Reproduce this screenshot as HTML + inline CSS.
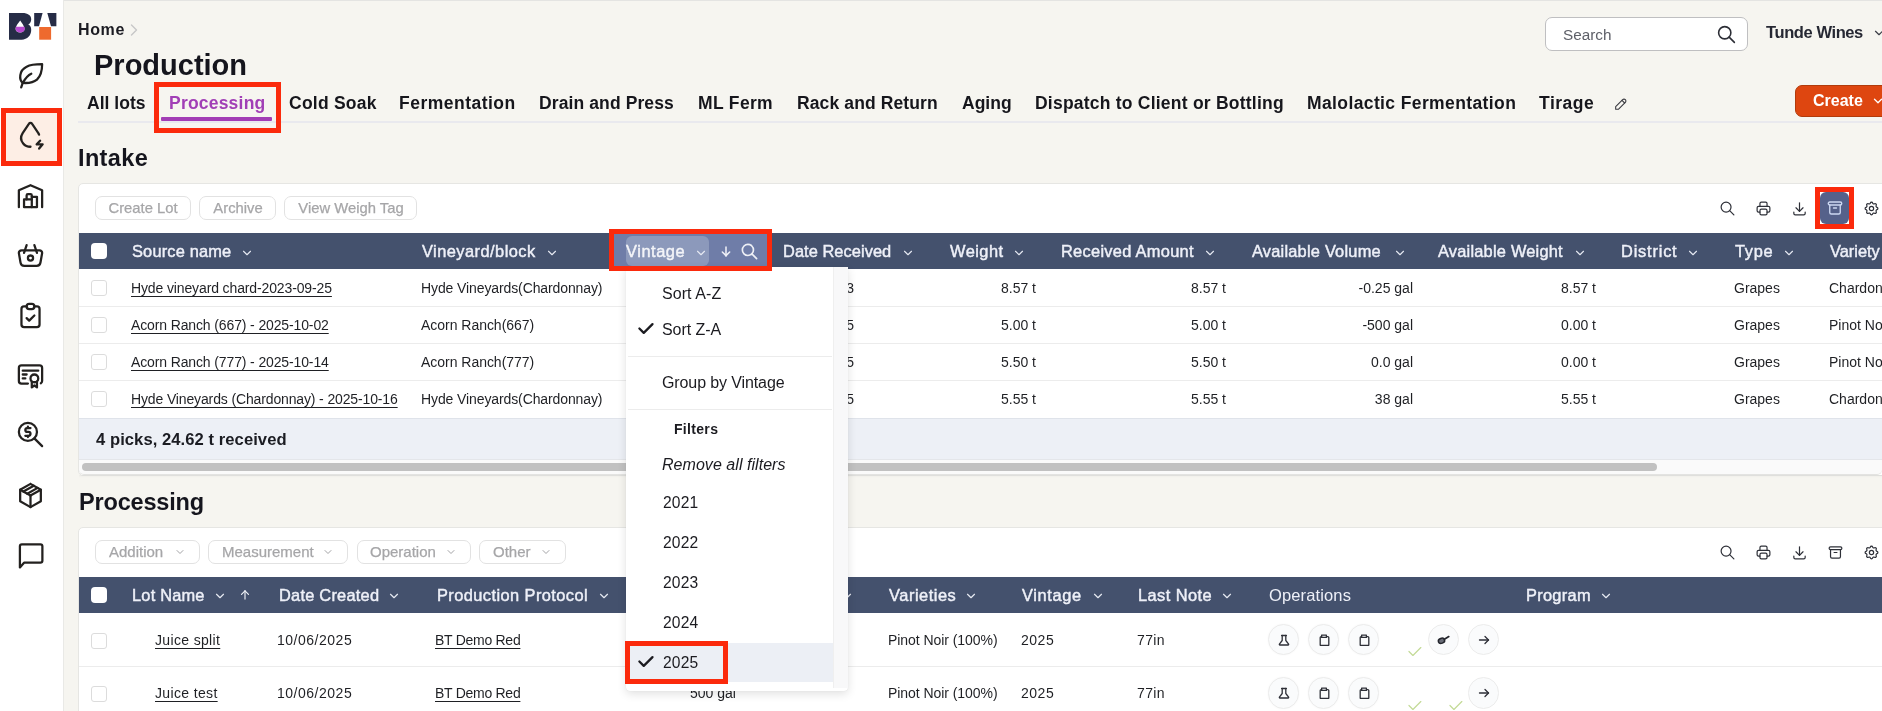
<!DOCTYPE html><html><head><meta charset="utf-8"><style>
html,body{margin:0;padding:0}
body{width:1882px;height:711px;overflow:hidden;position:relative;background:#f6f5f0;font-family:"Liberation Sans",sans-serif}
.t{position:absolute;white-space:nowrap;will-change:transform}
.r{position:absolute;box-sizing:border-box}
</style></head><body>
<div class="r" style="left:0px;top:0px;width:1882px;height:1px;background:#e4e4e2"></div>
<div class="r" style="left:0px;top:0px;width:63px;height:711px;background:#ffffff"></div>
<div class="r" style="left:63px;top:0px;width:1px;height:711px;background:#e9e9e6"></div>
<svg class="r" style="left:8px;top:12px" width="50" height="29" viewBox="0 0 50 29">
<path d="M1 1h13.5c5.2 0 8.7 2.3 8.7 6.2c0 2.6-1.2 4.3-3 5.3c2 .9 3 2.6 3 5.6c0 5.5-3.8 9.6-9.6 9.6H1z" fill="#262c46"/>
<path d="M12.2 8.6c-1.3 1.9-4.6 5.6-4.6 8.4c0 2.2 2 3.6 4.5 3.6s4.4-1.4 4.4-3.6c0-2.8-3.1-6.5-4.3-8.4z" fill="#fff"/>
<path d="M7.7 14.8h8.8c.2 .7 .2 1.5 .2 2.2c0 2.2-2 3.6-4.5 3.6s-4.5-1.4-4.5-3.6c0-.7 0-1.5 .2-2.2z" fill="#b84ad0"/>
<path d="M26.2 1h8.4l-3.6 13.2h-4.8z" fill="#262c46"/>
<path d="M39.3 1h9.1v13.2h-5.4z" fill="#262c46"/>
<rect x="31.2" y="15" width="11.9" height="12.7" fill="#ee6a2e"/>
</svg>
<div class="r" style="left:1px;top:108px;width:61px;height:58px;background:#fdeee5;border:5px solid #fb2a0c"></div>
<svg class="r" style="left:15.2px;top:59.4px;" width="31" height="31" viewBox="0 0 24 24" fill="none" stroke="#23211f" stroke-width="1.75" stroke-linecap="round" stroke-linejoin="round"><path d="M4.8 22l1.2 -3.5"/><path d="M6 18.5c-3 -2.5 -3 -9.5 3 -12.5c3 -1.7 7 -2 12 -2c0 5 -1 9 -4 12c-3 2.5 -7 2.8 -11 2.5z"/><path d="M6 18.5c2 -3.5 4 -6 6.6 -7.1"/></svg>
<svg class="r" style="left:15.2px;top:119.3px;" width="31" height="31" viewBox="0 0 24 24" fill="none" stroke="#23211f" stroke-width="1.75" stroke-linecap="round" stroke-linejoin="round"><path d="M18.628 12.076a6.653 6.653 0 0 0 -.564 -1.199l-4.8 -7.108a1.5 1.5 0 0 0 -2.528 0l-4.8 7.108c-1.6 2.526 -1.44 5.774 .4 8.04c1.4 1.718 3.569 2.564 5.664 2.564"/><path d="M19.4 16.8l-2.6 2.8h4.6l-2.7 3.3"/></svg>
<svg class="r" style="left:15.2px;top:180px;" width="31" height="31" viewBox="0 0 24 24" fill="none" stroke="#23211f" stroke-width="1.75" stroke-linecap="round" stroke-linejoin="round"><path d="M3 21v-13l9 -4l9 4v13"/><path d="M13 13h4v8h-10v-6h6"/><path d="M13 21v-9a1 1 0 0 0 -1 -1h-2a1 1 0 0 0 -1 1v3"/></svg>
<svg class="r" style="left:15.2px;top:240px;" width="31" height="31" viewBox="0 0 24 24" fill="none" stroke="#23211f" stroke-width="1.75" stroke-linecap="round" stroke-linejoin="round"><path d="M10 14a2 2 0 1 0 4 0a2 2 0 0 0 -4 0"/><path d="M5.001 8h13.999a2 2 0 0 1 1.977 2.304l-1.255 7.152a3 3 0 0 1 -2.966 2.544h-9.512a3 3 0 0 1 -2.965 -2.544l-1.255 -7.152a2 2 0 0 1 1.977 -2.304z"/><path d="M17 10l-2 -6"/><path d="M7 10l2 -6"/></svg>
<svg class="r" style="left:15.2px;top:300.3px;" width="31" height="31" viewBox="0 0 24 24" fill="none" stroke="#23211f" stroke-width="1.75" stroke-linecap="round" stroke-linejoin="round"><path d="M9 5h-2a2 2 0 0 0 -2 2v12a2 2 0 0 0 2 2h10a2 2 0 0 0 2 -2v-12a2 2 0 0 0 -2 -2h-2"/><path d="M9 3m0 2a2 2 0 0 1 2 -2h2a2 2 0 0 1 2 2v0a2 2 0 0 1 -2 2h-2a2 2 0 0 1 -2 -2z"/><path d="M9 14l2 2l4 -4"/></svg>
<svg class="r" style="left:15.2px;top:359.4px;" width="31" height="31" viewBox="0 0 24 24" fill="none" stroke="#23211f" stroke-width="1.75" stroke-linecap="round" stroke-linejoin="round"><path d="M15 15m-3 0a3 3 0 1 0 6 0a3 3 0 1 0 -6 0"/><path d="M13 17.5v4.5l2 -1.5l2 1.5v-4.5"/><path d="M10 19h-5a2 2 0 0 1 -2 -2v-10c0 -1.1 .9 -2 2 -2h14a2 2 0 0 1 2 2v10a2 2 0 0 1 -1 1.73"/><path d="M6 9l12 0"/><path d="M6 12l3 0"/><path d="M6 15l2 0"/></svg>
<svg class="r" style="left:15.2px;top:419.2px;" width="31" height="31" viewBox="0 0 24 24" fill="none" stroke="#23211f" stroke-width="1.75" stroke-linecap="round" stroke-linejoin="round"><path d="M10 10m-7 0a7 7 0 1 0 14 0a7 7 0 1 0 -14 0"/><path d="M21 21l-6 -6"/><path d="M12 7h-2.5a1.5 1.5 0 0 0 0 3h1a1.5 1.5 0 0 1 0 3h-2.5"/><path d="M10 13v1m0 -8v1"/></svg>
<svg class="r" style="left:15.2px;top:480px;" width="31" height="31" viewBox="0 0 24 24" fill="none" stroke="#23211f" stroke-width="1.75" stroke-linecap="round" stroke-linejoin="round"><path d="M12 3l8 4.5l0 9l-8 4.5l-8 -4.5l0 -9l8 -4.5"/><path d="M12 12l8 -4.5"/><path d="M12 12l0 9"/><path d="M12 12l-8 -4.5"/><path d="M14.5 4.4l-8 4.5"/><path d="M17.5 6.1l-8 4.5"/></svg>
<svg class="r" style="left:15.2px;top:538.6px;" width="31" height="31" viewBox="0 0 24 24" fill="none" stroke="#23211f" stroke-width="1.75" stroke-linecap="round" stroke-linejoin="round"><path d="M3.8 22v-16.3a1.5 1.5 0 0 1 1.5 -1.5h14.4a1.5 1.5 0 0 1 1.5 1.5v11.1a1.5 1.5 0 0 1 -1.5 1.5h-12.7z"/></svg>
<div class="t" style="left:78px;top:20.16px;font-size:16px;line-height:19.2px;font-weight:700;color:#1b1b22;;letter-spacing:0.607px">Home</div>
<svg class="r" style="left:124px;top:19.8px;" width="20" height="20" viewBox="0 0 24 24" fill="none" stroke="#c8c8c8" stroke-width="1.7" stroke-linecap="round" stroke-linejoin="round"><path d="M9 6l6 6l-6 6"/></svg>
<div class="t" style="left:94px;top:47.75px;font-size:29px;line-height:34.8px;font-weight:700;color:#15151d;">Production</div>
<div class="r" style="left:1545px;top:17px;width:203px;height:34px;background:#fff;border:1px solid #bfbfc1;border-radius:7px"></div>
<div class="t" style="left:1563px;top:25.72px;font-size:15.3px;line-height:18.36px;font-weight:400;color:#5e6068;">Search</div>
<svg class="r" style="left:1716px;top:24px;" width="21" height="21" viewBox="0 0 24 24" fill="none" stroke="#2b2d35" stroke-width="1.8" stroke-linecap="round" stroke-linejoin="round"><path d="M10 10m-7 0a7 7 0 1 0 14 0a7 7 0 1 0 -14 0"/><path d="M21 21l-6 -6"/></svg>
<div class="t" style="left:1766.3px;top:23.18px;font-size:16.5px;line-height:19.8px;font-weight:700;color:#262833;;letter-spacing:-0.401px">Tunde Wines</div>
<svg class="r" style="left:1872px;top:26px;" width="14" height="14" viewBox="0 0 24 24" fill="none" stroke="#3a3c45" stroke-width="2" stroke-linecap="round" stroke-linejoin="round"><path d="M6 9l6 6l6 -6"/></svg>
<div class="r" style="left:78px;top:121px;width:1804px;height:2px;background:#e9e9ee"></div>
<div class="t" style="left:86.7px;top:92.64px;font-size:17.5px;line-height:21.0px;font-weight:700;color:#16161c;;letter-spacing:0.020px">All lots</div>
<div class="t" style="left:169.4px;top:92.64px;font-size:17.5px;line-height:21.0px;font-weight:700;color:#a13fb6;;letter-spacing:0.208px">Processing</div>
<div class="t" style="left:288.5px;top:92.64px;font-size:17.5px;line-height:21.0px;font-weight:700;color:#16161c;;letter-spacing:0.242px">Cold Soak</div>
<div class="t" style="left:399.4px;top:92.64px;font-size:17.5px;line-height:21.0px;font-weight:700;color:#16161c;;letter-spacing:0.485px">Fermentation</div>
<div class="t" style="left:539.3px;top:92.64px;font-size:17.5px;line-height:21.0px;font-weight:700;color:#16161c;;letter-spacing:0.110px">Drain and Press</div>
<div class="t" style="left:698.3px;top:92.64px;font-size:17.5px;line-height:21.0px;font-weight:700;color:#16161c;;letter-spacing:0.346px">ML Ferm</div>
<div class="t" style="left:796.8px;top:92.64px;font-size:17.5px;line-height:21.0px;font-weight:700;color:#16161c;;letter-spacing:0.119px">Rack and Return</div>
<div class="t" style="left:961.9px;top:92.64px;font-size:17.5px;line-height:21.0px;font-weight:700;color:#16161c;;letter-spacing:0.022px">Aging</div>
<div class="t" style="left:1034.9px;top:92.64px;font-size:17.5px;line-height:21.0px;font-weight:700;color:#16161c;;letter-spacing:0.224px">Dispatch to Client or Bottling</div>
<div class="t" style="left:1307.1px;top:92.64px;font-size:17.5px;line-height:21.0px;font-weight:700;color:#16161c;;letter-spacing:0.387px">Malolactic Fermentation</div>
<div class="t" style="left:1538.9px;top:92.64px;font-size:17.5px;line-height:21.0px;font-weight:700;color:#16161c;;letter-spacing:0.512px">Tirage</div>
<div class="r" style="left:161px;top:117px;width:111px;height:4px;background:#a23db5;border-radius:1px"></div>
<div class="r" style="left:154px;top:82px;width:127px;height:51px;border:5px solid #fb2a0c"></div>
<svg class="r" style="left:1613px;top:96px;" width="16" height="16" viewBox="0 0 24 24" fill="none" stroke="#3a3a40" stroke-width="1.6" stroke-linecap="round" stroke-linejoin="round"><path d="M4 20h4l10.5 -10.5a2.828 2.828 0 1 0 -4 -4l-10.5 10.5v4"/><path d="M13.5 6.5l4 4"/></svg>
<div class="r" style="left:1795px;top:85px;width:100px;height:32px;background:#de4610;border:1px solid #b13b0c;border-radius:7px"></div>
<div class="t" style="left:1812.6px;top:90.86px;font-size:16px;line-height:19.2px;font-weight:700;color:#ffffff;">Create</div>
<svg class="r" style="left:1871px;top:94px;" width="14" height="14" viewBox="0 0 24 24" fill="none" stroke="#fff" stroke-width="2.2" stroke-linecap="round" stroke-linejoin="round"><path d="M6 9l6 6l6 -6"/></svg>
<div class="t" style="left:78px;top:144.16px;font-size:23.5px;line-height:28.2px;font-weight:700;color:#15151d;;letter-spacing:0.357px">Intake</div>
<div class="r" style="left:78px;top:183px;width:1820px;height:293px;background:#fff;border-radius:5px;border:1px solid #e6e6e3"></div>
<div class="r" style="left:95px;top:196px;width:96px;height:24px;border:1px solid #e2e2e2;border-radius:7px;background:#fff"></div>
<div class="t" style="left:-157.0px;width:600px;text-align:center;top:199.79px;font-size:14.8px;line-height:17.76px;font-weight:400;color:#a6a6a8;-webkit-text-stroke:0.25px #a6a6a8">Create Lot</div>
<div class="r" style="left:199px;top:196px;width:77px;height:24px;border:1px solid #e2e2e2;border-radius:7px;background:#fff"></div>
<div class="t" style="left:-62.5px;width:600px;text-align:center;top:199.79px;font-size:14.8px;line-height:17.76px;font-weight:400;color:#a6a6a8;-webkit-text-stroke:0.25px #a6a6a8">Archive</div>
<div class="r" style="left:284px;top:196px;width:133px;height:24px;border:1px solid #e2e2e2;border-radius:7px;background:#fff"></div>
<div class="t" style="left:50.5px;width:600px;text-align:center;top:199.79px;font-size:14.8px;line-height:17.76px;font-weight:400;color:#a6a6a8;-webkit-text-stroke:0.25px #a6a6a8">View Weigh Tag</div>
<svg class="r" style="left:1718.5px;top:199.5px;" width="17" height="17" viewBox="0 0 24 24" fill="none" stroke="#2e3038" stroke-width="1.7" stroke-linecap="round" stroke-linejoin="round"><path d="M10 10m-7 0a7 7 0 1 0 14 0a7 7 0 1 0 -14 0"/><path d="M21 21l-6 -6"/></svg>
<svg class="r" style="left:1754.5px;top:199.5px;" width="17" height="17" viewBox="0 0 24 24" fill="none" stroke="#2e3038" stroke-width="1.7" stroke-linecap="round" stroke-linejoin="round"><path d="M17 17h2a2 2 0 0 0 2 -2v-4a2 2 0 0 0 -2 -2h-14a2 2 0 0 0 -2 2v4a2 2 0 0 0 2 2h2"/><path d="M17 9v-4a2 2 0 0 0 -2 -2h-6a2 2 0 0 0 -2 2v4"/><path d="M7 13m0 2a2 2 0 0 1 2 -2h6a2 2 0 0 1 2 2v4a2 2 0 0 1 -2 2h-6a2 2 0 0 1 -2 -2z"/></svg>
<svg class="r" style="left:1790.5px;top:199.5px;" width="17" height="17" viewBox="0 0 24 24" fill="none" stroke="#2e3038" stroke-width="1.7" stroke-linecap="round" stroke-linejoin="round"><path d="M4 17v2a2 2 0 0 0 2 2h12a2 2 0 0 0 2 -2v-2"/><path d="M7 11l5 5l5 -5"/><path d="M12 4l0 12"/></svg>
<svg class="r" style="left:1862.5px;top:199.5px;" width="17" height="17" viewBox="0 0 24 24" fill="none" stroke="#2e3038" stroke-width="1.7" stroke-linecap="round" stroke-linejoin="round"><path d="M10.325 4.317c.426 -1.756 2.924 -1.756 3.35 0a1.724 1.724 0 0 0 2.573 1.066c1.543 -.94 3.31 .826 2.37 2.37a1.724 1.724 0 0 0 1.065 2.572c1.756 .426 1.756 2.924 0 3.35a1.724 1.724 0 0 0 -1.066 2.573c.94 1.543 -.826 3.31 -2.37 2.37a1.724 1.724 0 0 0 -2.572 1.065c-.426 1.756 -2.924 1.756 -3.35 0a1.724 1.724 0 0 0 -2.573 -1.066c-1.543 .94 -3.31 -.826 -2.37 -2.37a1.724 1.724 0 0 0 -1.065 -2.572c-1.756 -.426 -1.756 -2.924 0 -3.35a1.724 1.724 0 0 0 1.066 -2.573c-.94 -1.543 .826 -3.31 2.37 -2.37c1 .608 2.296 .07 2.572 -1.065z"/><path d="M9 12a3 3 0 1 0 6 0a3 3 0 0 0 -6 0"/></svg>
<div class="r" style="left:79px;top:233px;width:1803px;height:36px;background:#44516d"></div>
<div class="r" style="left:91px;top:243px;width:16px;height:16px;background:#fff;border-radius:4px"></div>
<div class="t" style="left:132.4px;top:241.68px;font-size:16.4px;line-height:19.68px;font-weight:400;color:#eef0f8;-webkit-text-stroke:0.45px #eef0f8;letter-spacing:0.172px">Source name</div>
<svg class="r" style="left:239.9px;top:245.5px;" width="14" height="14" viewBox="0 0 24 24" fill="none" stroke="#e6e9f2" stroke-width="1.9" stroke-linecap="round" stroke-linejoin="round"><path d="M6 9l6 6l6 -6"/></svg>
<div class="t" style="left:422px;top:241.68px;font-size:16.4px;line-height:19.68px;font-weight:400;color:#eef0f8;-webkit-text-stroke:0.45px #eef0f8;letter-spacing:0.459px">Vineyard/block</div>
<svg class="r" style="left:544.5px;top:245.5px;" width="14" height="14" viewBox="0 0 24 24" fill="none" stroke="#e6e9f2" stroke-width="1.9" stroke-linecap="round" stroke-linejoin="round"><path d="M6 9l6 6l6 -6"/></svg>
<div class="t" style="left:783.2px;top:241.68px;font-size:16.4px;line-height:19.68px;font-weight:400;color:#eef0f8;-webkit-text-stroke:0.45px #eef0f8;letter-spacing:0.060px">Date Received</div>
<svg class="r" style="left:900.5px;top:245.5px;" width="14" height="14" viewBox="0 0 24 24" fill="none" stroke="#e6e9f2" stroke-width="1.9" stroke-linecap="round" stroke-linejoin="round"><path d="M6 9l6 6l6 -6"/></svg>
<div class="t" style="left:949.8px;top:241.68px;font-size:16.4px;line-height:19.68px;font-weight:400;color:#eef0f8;-webkit-text-stroke:0.45px #eef0f8;letter-spacing:0.468px">Weight</div>
<svg class="r" style="left:1011.9px;top:245.5px;" width="14" height="14" viewBox="0 0 24 24" fill="none" stroke="#e6e9f2" stroke-width="1.9" stroke-linecap="round" stroke-linejoin="round"><path d="M6 9l6 6l6 -6"/></svg>
<div class="t" style="left:1061.3px;top:241.68px;font-size:16.4px;line-height:19.68px;font-weight:400;color:#eef0f8;-webkit-text-stroke:0.45px #eef0f8;letter-spacing:0.287px">Received Amount</div>
<svg class="r" style="left:1202.5px;top:245.5px;" width="14" height="14" viewBox="0 0 24 24" fill="none" stroke="#e6e9f2" stroke-width="1.9" stroke-linecap="round" stroke-linejoin="round"><path d="M6 9l6 6l6 -6"/></svg>
<div class="t" style="left:1251.6px;top:241.68px;font-size:16.4px;line-height:19.68px;font-weight:400;color:#eef0f8;-webkit-text-stroke:0.45px #eef0f8;letter-spacing:0.211px">Available Volume</div>
<svg class="r" style="left:1392.5px;top:245.5px;" width="14" height="14" viewBox="0 0 24 24" fill="none" stroke="#e6e9f2" stroke-width="1.9" stroke-linecap="round" stroke-linejoin="round"><path d="M6 9l6 6l6 -6"/></svg>
<div class="t" style="left:1438px;top:241.68px;font-size:16.4px;line-height:19.68px;font-weight:400;color:#eef0f8;-webkit-text-stroke:0.45px #eef0f8;letter-spacing:0.212px">Available Weight</div>
<svg class="r" style="left:1572.5px;top:245.5px;" width="14" height="14" viewBox="0 0 24 24" fill="none" stroke="#e6e9f2" stroke-width="1.9" stroke-linecap="round" stroke-linejoin="round"><path d="M6 9l6 6l6 -6"/></svg>
<div class="t" style="left:1621px;top:241.68px;font-size:16.4px;line-height:19.68px;font-weight:400;color:#eef0f8;-webkit-text-stroke:0.45px #eef0f8;letter-spacing:0.800px">District</div>
<svg class="r" style="left:1685.5px;top:245.5px;" width="14" height="14" viewBox="0 0 24 24" fill="none" stroke="#e6e9f2" stroke-width="1.9" stroke-linecap="round" stroke-linejoin="round"><path d="M6 9l6 6l6 -6"/></svg>
<div class="t" style="left:1734.8px;top:241.68px;font-size:16.4px;line-height:19.68px;font-weight:400;color:#eef0f8;-webkit-text-stroke:0.45px #eef0f8;letter-spacing:0.704px">Type</div>
<svg class="r" style="left:1781.5px;top:245.5px;" width="14" height="14" viewBox="0 0 24 24" fill="none" stroke="#e6e9f2" stroke-width="1.9" stroke-linecap="round" stroke-linejoin="round"><path d="M6 9l6 6l6 -6"/></svg>
<div class="t" style="left:1830.4px;top:241.68px;font-size:16.4px;line-height:19.68px;font-weight:400;color:#eef0f8;-webkit-text-stroke:0.45px #eef0f8">Variety</div>
<div class="r" style="left:614px;top:234px;width:153px;height:33px;background:#6f7da8"></div>
<div class="r" style="left:626px;top:236px;width:83px;height:30px;background:#8c99bb;border-radius:6px"></div>
<div class="t" style="left:626px;top:241.68px;font-size:16.4px;line-height:19.68px;font-weight:400;color:#f3f4f8;-webkit-text-stroke:0.45px #f3f4f8;letter-spacing:0.558px">Vintage</div>
<svg class="r" style="left:693.5px;top:245.5px;" width="14" height="14" viewBox="0 0 24 24" fill="none" stroke="#e6e9f2" stroke-width="1.9" stroke-linecap="round" stroke-linejoin="round"><path d="M6 9l6 6l6 -6"/></svg>
<svg class="r" style="left:717.5px;top:243px;" width="16" height="16" viewBox="0 0 24 24" fill="none" stroke="#eef0f6" stroke-width="2.3" stroke-linecap="round" stroke-linejoin="round"><path d="M12 6l0 13"/><path d="M17.5 13.5l-5.5 5.5"/><path d="M6.5 13.5l5.5 5.5"/></svg>
<svg class="r" style="left:740px;top:241.5px;" width="19" height="19" viewBox="0 0 24 24" fill="none" stroke="#eef0f6" stroke-width="2.1" stroke-linecap="round" stroke-linejoin="round"><path d="M10 10m-7 0a7 7 0 1 0 14 0a7 7 0 1 0 -14 0"/><path d="M21 21l-6 -6"/></svg>
<div class="r" style="left:1815px;top:187px;width:39px;height:42px;border:5px solid #fb2a0c;background:#fff"></div>
<div class="r" style="left:1820px;top:192px;width:29px;height:32px;background:#55618a;border-radius:6px"></div>
<svg class="r" style="left:1826px;top:199px;" width="18" height="18" viewBox="0 0 24 24" fill="none" stroke="#cdd8f2" stroke-width="1.8" stroke-linecap="round" stroke-linejoin="round"><path d="M3 4m0 2a2 2 0 0 1 2 -2h14a2 2 0 0 1 2 2v0a2 2 0 0 1 -2 2h-14a2 2 0 0 1 -2 -2z"/><path d="M5 8v10a2 2 0 0 0 2 2h10a2 2 0 0 0 2 -2v-10"/><path d="M10 12l4 0"/></svg>
<div class="r" style="left:91px;top:280px;width:16px;height:16px;border:1px solid #dcdcdc;border-radius:3px;background:#fff"></div>
<div class="t" style="left:131.1px;top:279.85px;font-size:14px;line-height:16.8px;font-weight:400;color:#1f2024;text-decoration:underline;text-underline-offset:3px;text-decoration-thickness:1px;;letter-spacing:-0.127px">Hyde vineyard chard-2023-09-25</div>
<div class="t" style="left:420.5px;top:279.85px;font-size:14px;line-height:16.8px;font-weight:400;color:#1f2024;;letter-spacing:-0.107px">Hyde Vineyards(Chardonnay)</div>
<div class="t" style="left:783.5px;top:279.85px;font-size:14px;line-height:16.8px;font-weight:400;color:#1f2024;">09/25/2023</div>
<div class="t" style="left:435.5px;width:600px;text-align:right;top:279.85px;font-size:14px;line-height:16.8px;font-weight:400;color:#1f2024;">8.57 t</div>
<div class="t" style="left:626px;width:600px;text-align:right;top:279.85px;font-size:14px;line-height:16.8px;font-weight:400;color:#1f2024;">8.57 t</div>
<div class="t" style="left:813px;width:600px;text-align:right;top:279.85px;font-size:14px;line-height:16.8px;font-weight:400;color:#1f2024;">-0.25 gal</div>
<div class="t" style="left:996px;width:600px;text-align:right;top:279.85px;font-size:14px;line-height:16.8px;font-weight:400;color:#1f2024;">8.57 t</div>
<div class="t" style="left:1734.2px;top:279.85px;font-size:14px;line-height:16.8px;font-weight:400;color:#1f2024;">Grapes</div>
<div class="t" style="left:1829.1px;top:279.85px;font-size:14px;line-height:16.8px;font-weight:400;color:#1f2024;">Chardonnay</div>
<div class="r" style="left:79px;top:306px;width:1803px;height:1px;background:#ececec"></div>
<div class="r" style="left:91px;top:317px;width:16px;height:16px;border:1px solid #dcdcdc;border-radius:3px;background:#fff"></div>
<div class="t" style="left:131.1px;top:316.85px;font-size:14px;line-height:16.8px;font-weight:400;color:#1f2024;text-decoration:underline;text-underline-offset:3px;text-decoration-thickness:1px;;letter-spacing:-0.128px">Acorn Ranch (667) - 2025-10-02</div>
<div class="t" style="left:420.5px;top:316.85px;font-size:14px;line-height:16.8px;font-weight:400;color:#1f2024;;letter-spacing:-0.027px">Acorn Ranch(667)</div>
<div class="t" style="left:783.5px;top:316.85px;font-size:14px;line-height:16.8px;font-weight:400;color:#1f2024;">10/02/2025</div>
<div class="t" style="left:435.5px;width:600px;text-align:right;top:316.85px;font-size:14px;line-height:16.8px;font-weight:400;color:#1f2024;">5.00 t</div>
<div class="t" style="left:626px;width:600px;text-align:right;top:316.85px;font-size:14px;line-height:16.8px;font-weight:400;color:#1f2024;">5.00 t</div>
<div class="t" style="left:813px;width:600px;text-align:right;top:316.85px;font-size:14px;line-height:16.8px;font-weight:400;color:#1f2024;">-500 gal</div>
<div class="t" style="left:996px;width:600px;text-align:right;top:316.85px;font-size:14px;line-height:16.8px;font-weight:400;color:#1f2024;">0.00 t</div>
<div class="t" style="left:1734.2px;top:316.85px;font-size:14px;line-height:16.8px;font-weight:400;color:#1f2024;">Grapes</div>
<div class="t" style="left:1829.1px;top:316.85px;font-size:14px;line-height:16.8px;font-weight:400;color:#1f2024;">Pinot Noir</div>
<div class="r" style="left:79px;top:343px;width:1803px;height:1px;background:#ececec"></div>
<div class="r" style="left:91px;top:354px;width:16px;height:16px;border:1px solid #dcdcdc;border-radius:3px;background:#fff"></div>
<div class="t" style="left:131.1px;top:353.65px;font-size:14px;line-height:16.8px;font-weight:400;color:#1f2024;text-decoration:underline;text-underline-offset:3px;text-decoration-thickness:1px;;letter-spacing:-0.128px">Acorn Ranch (777) - 2025-10-14</div>
<div class="t" style="left:420.5px;top:353.65px;font-size:14px;line-height:16.8px;font-weight:400;color:#1f2024;;letter-spacing:-0.027px">Acorn Ranch(777)</div>
<div class="t" style="left:783.5px;top:353.65px;font-size:14px;line-height:16.8px;font-weight:400;color:#1f2024;">10/14/2025</div>
<div class="t" style="left:435.5px;width:600px;text-align:right;top:353.65px;font-size:14px;line-height:16.8px;font-weight:400;color:#1f2024;">5.50 t</div>
<div class="t" style="left:626px;width:600px;text-align:right;top:353.65px;font-size:14px;line-height:16.8px;font-weight:400;color:#1f2024;">5.50 t</div>
<div class="t" style="left:813px;width:600px;text-align:right;top:353.65px;font-size:14px;line-height:16.8px;font-weight:400;color:#1f2024;">0.0 gal</div>
<div class="t" style="left:996px;width:600px;text-align:right;top:353.65px;font-size:14px;line-height:16.8px;font-weight:400;color:#1f2024;">0.00 t</div>
<div class="t" style="left:1734.2px;top:353.65px;font-size:14px;line-height:16.8px;font-weight:400;color:#1f2024;">Grapes</div>
<div class="t" style="left:1829.1px;top:353.65px;font-size:14px;line-height:16.8px;font-weight:400;color:#1f2024;">Pinot Noir</div>
<div class="r" style="left:79px;top:380px;width:1803px;height:1px;background:#ececec"></div>
<div class="r" style="left:91px;top:391px;width:16px;height:16px;border:1px solid #dcdcdc;border-radius:3px;background:#fff"></div>
<div class="t" style="left:131.1px;top:390.55px;font-size:14px;line-height:16.8px;font-weight:400;color:#1f2024;text-decoration:underline;text-underline-offset:3px;text-decoration-thickness:1px;;letter-spacing:-0.137px">Hyde Vineyards (Chardonnay) - 2025-10-16</div>
<div class="t" style="left:420.5px;top:390.55px;font-size:14px;line-height:16.8px;font-weight:400;color:#1f2024;;letter-spacing:-0.107px">Hyde Vineyards(Chardonnay)</div>
<div class="t" style="left:783.5px;top:390.55px;font-size:14px;line-height:16.8px;font-weight:400;color:#1f2024;">10/16/2025</div>
<div class="t" style="left:435.5px;width:600px;text-align:right;top:390.55px;font-size:14px;line-height:16.8px;font-weight:400;color:#1f2024;">5.55 t</div>
<div class="t" style="left:626px;width:600px;text-align:right;top:390.55px;font-size:14px;line-height:16.8px;font-weight:400;color:#1f2024;">5.55 t</div>
<div class="t" style="left:813px;width:600px;text-align:right;top:390.55px;font-size:14px;line-height:16.8px;font-weight:400;color:#1f2024;">38 gal</div>
<div class="t" style="left:996px;width:600px;text-align:right;top:390.55px;font-size:14px;line-height:16.8px;font-weight:400;color:#1f2024;">5.55 t</div>
<div class="t" style="left:1734.2px;top:390.55px;font-size:14px;line-height:16.8px;font-weight:400;color:#1f2024;">Grapes</div>
<div class="t" style="left:1829.1px;top:390.55px;font-size:14px;line-height:16.8px;font-weight:400;color:#1f2024;">Chardonnay</div>
<div class="r" style="left:79px;top:418px;width:1803px;height:42px;background:#edf0f6;border-top:1px solid #dfe3ea;border-bottom:1px solid #e4e6ea"></div>
<div class="r" style="left:79px;top:460px;width:1803px;height:15px;background:#fafafa;border-bottom:1px solid #e3e3e1;border-radius:0 0 5px 5px"></div>
<div class="r" style="left:79px;top:475px;width:1803px;height:3px;background:linear-gradient(rgba(0,0,0,0.035),rgba(0,0,0,0))"></div>
<div class="t" style="left:95.7px;top:429.89px;font-size:16.6px;line-height:19.92px;font-weight:700;color:#1b1c22;;letter-spacing:0.060px">4 picks, 24.62 t received</div>
<div class="r" style="left:82px;top:463px;width:1575px;height:8px;background:#c1c1c1;border-radius:4px"></div>
<div class="t" style="left:78.6px;top:488.46px;font-size:23.5px;line-height:28.2px;font-weight:700;color:#15151d;;letter-spacing:-0.174px">Processing</div>
<div class="r" style="left:78px;top:527px;width:1820px;height:200px;background:#fff;border-radius:5px;border:1px solid #e6e6e3"></div>
<div class="r" style="left:95px;top:540px;width:105px;height:24px;border:1px solid #e2e2e2;border-radius:7px;background:#fff"></div>
<div class="t" style="left:108.5px;top:543.10px;font-size:15px;line-height:18.0px;font-weight:400;color:#a6a6a8;-webkit-text-stroke:0.25px #a6a6a8">Addition</div>
<svg class="r" style="left:174px;top:546px;" width="12" height="12" viewBox="0 0 24 24" fill="none" stroke="#a3a3a6" stroke-width="2" stroke-linecap="round" stroke-linejoin="round"><path d="M6 9l6 6l6 -6"/></svg>
<div class="r" style="left:208px;top:540px;width:140px;height:24px;border:1px solid #e2e2e2;border-radius:7px;background:#fff"></div>
<div class="t" style="left:221.5px;top:543.10px;font-size:15px;line-height:18.0px;font-weight:400;color:#a6a6a8;-webkit-text-stroke:0.25px #a6a6a8">Measurement</div>
<svg class="r" style="left:322px;top:546px;" width="12" height="12" viewBox="0 0 24 24" fill="none" stroke="#a3a3a6" stroke-width="2" stroke-linecap="round" stroke-linejoin="round"><path d="M6 9l6 6l6 -6"/></svg>
<div class="r" style="left:356.6px;top:540px;width:114px;height:24px;border:1px solid #e2e2e2;border-radius:7px;background:#fff"></div>
<div class="t" style="left:370.1px;top:543.10px;font-size:15px;line-height:18.0px;font-weight:400;color:#a6a6a8;-webkit-text-stroke:0.25px #a6a6a8">Operation</div>
<svg class="r" style="left:444.6px;top:546px;" width="12" height="12" viewBox="0 0 24 24" fill="none" stroke="#a3a3a6" stroke-width="2" stroke-linecap="round" stroke-linejoin="round"><path d="M6 9l6 6l6 -6"/></svg>
<div class="r" style="left:479.3px;top:540px;width:87px;height:24px;border:1px solid #e2e2e2;border-radius:7px;background:#fff"></div>
<div class="t" style="left:492.8px;top:543.10px;font-size:15px;line-height:18.0px;font-weight:400;color:#a6a6a8;-webkit-text-stroke:0.25px #a6a6a8">Other</div>
<svg class="r" style="left:540.3px;top:546px;" width="12" height="12" viewBox="0 0 24 24" fill="none" stroke="#a3a3a6" stroke-width="2" stroke-linecap="round" stroke-linejoin="round"><path d="M6 9l6 6l6 -6"/></svg>
<svg class="r" style="left:1718.5px;top:543.5px;" width="17" height="17" viewBox="0 0 24 24" fill="none" stroke="#2e3038" stroke-width="1.7" stroke-linecap="round" stroke-linejoin="round"><path d="M10 10m-7 0a7 7 0 1 0 14 0a7 7 0 1 0 -14 0"/><path d="M21 21l-6 -6"/></svg>
<svg class="r" style="left:1754.5px;top:543.5px;" width="17" height="17" viewBox="0 0 24 24" fill="none" stroke="#2e3038" stroke-width="1.7" stroke-linecap="round" stroke-linejoin="round"><path d="M17 17h2a2 2 0 0 0 2 -2v-4a2 2 0 0 0 -2 -2h-14a2 2 0 0 0 -2 2v4a2 2 0 0 0 2 2h2"/><path d="M17 9v-4a2 2 0 0 0 -2 -2h-6a2 2 0 0 0 -2 2v4"/><path d="M7 13m0 2a2 2 0 0 1 2 -2h6a2 2 0 0 1 2 2v4a2 2 0 0 1 -2 2h-6a2 2 0 0 1 -2 -2z"/></svg>
<svg class="r" style="left:1790.5px;top:543.5px;" width="17" height="17" viewBox="0 0 24 24" fill="none" stroke="#2e3038" stroke-width="1.7" stroke-linecap="round" stroke-linejoin="round"><path d="M4 17v2a2 2 0 0 0 2 2h12a2 2 0 0 0 2 -2v-2"/><path d="M7 11l5 5l5 -5"/><path d="M12 4l0 12"/></svg>
<svg class="r" style="left:1826.5px;top:543.5px;" width="17" height="17" viewBox="0 0 24 24" fill="none" stroke="#2e3038" stroke-width="1.7" stroke-linecap="round" stroke-linejoin="round"><path d="M3 4m0 2a2 2 0 0 1 2 -2h14a2 2 0 0 1 2 2v0a2 2 0 0 1 -2 2h-14a2 2 0 0 1 -2 -2z"/><path d="M5 8v10a2 2 0 0 0 2 2h10a2 2 0 0 0 2 -2v-10"/><path d="M10 12l4 0"/></svg>
<svg class="r" style="left:1862.5px;top:543.5px;" width="17" height="17" viewBox="0 0 24 24" fill="none" stroke="#2e3038" stroke-width="1.7" stroke-linecap="round" stroke-linejoin="round"><path d="M10.325 4.317c.426 -1.756 2.924 -1.756 3.35 0a1.724 1.724 0 0 0 2.573 1.066c1.543 -.94 3.31 .826 2.37 2.37a1.724 1.724 0 0 0 1.065 2.572c1.756 .426 1.756 2.924 0 3.35a1.724 1.724 0 0 0 -1.066 2.573c.94 1.543 -.826 3.31 -2.37 2.37a1.724 1.724 0 0 0 -2.572 1.065c-.426 1.756 -2.924 1.756 -3.35 0a1.724 1.724 0 0 0 -2.573 -1.066c-1.543 .94 -3.31 -.826 -2.37 -2.37a1.724 1.724 0 0 0 -1.065 -2.572c-1.756 -.426 -1.756 -2.924 0 -3.35a1.724 1.724 0 0 0 1.066 -2.573c-.94 -1.543 .826 -3.31 2.37 -2.37c1 .608 2.296 .07 2.572 -1.065z"/><path d="M9 12a3 3 0 1 0 6 0a3 3 0 0 0 -6 0"/></svg>
<div class="r" style="left:79px;top:577px;width:1803px;height:36px;background:#44516d"></div>
<div class="r" style="left:91px;top:587px;width:16px;height:16px;background:#fff;border-radius:4px"></div>
<div class="t" style="left:132.2px;top:586.18px;font-size:16.4px;line-height:19.68px;font-weight:400;color:#eef0f8;-webkit-text-stroke:0.45px #eef0f8;letter-spacing:0.201px">Lot Name</div>
<svg class="r" style="left:212.8px;top:588.9px;" width="14" height="14" viewBox="0 0 24 24" fill="none" stroke="#e6e9f2" stroke-width="2" stroke-linecap="round" stroke-linejoin="round"><path d="M6 9l6 6l6 -6"/></svg>
<div class="t" style="left:278.6px;top:586.18px;font-size:16.4px;line-height:19.68px;font-weight:400;color:#eef0f8;-webkit-text-stroke:0.45px #eef0f8;letter-spacing:0.229px">Date Created</div>
<svg class="r" style="left:387.0px;top:588.9px;" width="14" height="14" viewBox="0 0 24 24" fill="none" stroke="#e6e9f2" stroke-width="2" stroke-linecap="round" stroke-linejoin="round"><path d="M6 9l6 6l6 -6"/></svg>
<div class="t" style="left:437px;top:586.18px;font-size:16.4px;line-height:19.68px;font-weight:400;color:#eef0f8;-webkit-text-stroke:0.45px #eef0f8;letter-spacing:0.423px">Production Protocol</div>
<svg class="r" style="left:596.5px;top:588.9px;" width="14" height="14" viewBox="0 0 24 24" fill="none" stroke="#e6e9f2" stroke-width="2" stroke-linecap="round" stroke-linejoin="round"><path d="M6 9l6 6l6 -6"/></svg>
<div class="t" style="left:690px;top:586.18px;font-size:16.4px;line-height:19.68px;font-weight:400;color:#eef0f8;-webkit-text-stroke:0.45px #eef0f8">Volume</div>
<svg class="r" style="left:839.5px;top:588.9px;" width="14" height="14" viewBox="0 0 24 24" fill="none" stroke="#e6e9f2" stroke-width="2" stroke-linecap="round" stroke-linejoin="round"><path d="M6 9l6 6l6 -6"/></svg>
<div class="t" style="left:888.8px;top:586.18px;font-size:16.4px;line-height:19.68px;font-weight:400;color:#eef0f8;-webkit-text-stroke:0.45px #eef0f8;letter-spacing:0.529px">Varieties</div>
<svg class="r" style="left:963.9px;top:588.9px;" width="14" height="14" viewBox="0 0 24 24" fill="none" stroke="#e6e9f2" stroke-width="2" stroke-linecap="round" stroke-linejoin="round"><path d="M6 9l6 6l6 -6"/></svg>
<div class="t" style="left:1021.7px;top:586.18px;font-size:16.4px;line-height:19.68px;font-weight:400;color:#eef0f8;-webkit-text-stroke:0.45px #eef0f8;letter-spacing:0.642px">Vintage</div>
<svg class="r" style="left:1090.5px;top:588.9px;" width="14" height="14" viewBox="0 0 24 24" fill="none" stroke="#e6e9f2" stroke-width="2" stroke-linecap="round" stroke-linejoin="round"><path d="M6 9l6 6l6 -6"/></svg>
<div class="t" style="left:1138px;top:586.18px;font-size:16.4px;line-height:19.68px;font-weight:400;color:#eef0f8;-webkit-text-stroke:0.45px #eef0f8;letter-spacing:0.439px">Last Note</div>
<svg class="r" style="left:1219.5px;top:588.9px;" width="14" height="14" viewBox="0 0 24 24" fill="none" stroke="#e6e9f2" stroke-width="2" stroke-linecap="round" stroke-linejoin="round"><path d="M6 9l6 6l6 -6"/></svg>
<div class="t" style="left:1525.5px;top:586.18px;font-size:16.4px;line-height:19.68px;font-weight:400;color:#eef0f8;-webkit-text-stroke:0.45px #eef0f8;letter-spacing:0.284px">Program</div>
<svg class="r" style="left:1599.0px;top:588.9px;" width="14" height="14" viewBox="0 0 24 24" fill="none" stroke="#e6e9f2" stroke-width="2" stroke-linecap="round" stroke-linejoin="round"><path d="M6 9l6 6l6 -6"/></svg>
<svg class="r" style="left:238px;top:588px;" width="14" height="14" viewBox="0 0 24 24" fill="none" stroke="#eef0f6" stroke-width="2" stroke-linecap="round" stroke-linejoin="round"><path d="M12 5l0 14"/><path d="M18 11l-6 -6"/><path d="M6 11l6 -6"/></svg>
<div class="t" style="left:1268.8px;top:586.08px;font-size:16.5px;line-height:19.8px;font-weight:400;color:#eef0f8;;letter-spacing:0.135px">Operations</div>
<div class="r" style="left:91px;top:633px;width:16px;height:16px;border:1px solid #dcdcdc;border-radius:3px;background:#fff"></div>
<div class="t" style="left:155px;top:631.95px;font-size:14px;line-height:16.8px;font-weight:400;color:#1f2024;text-decoration:underline;text-underline-offset:3px;text-decoration-thickness:1px;;letter-spacing:0.344px">Juice split</div>
<div class="t" style="left:276.9px;top:631.95px;font-size:14px;line-height:16.8px;font-weight:400;color:#1f2024;;letter-spacing:0.514px">10/06/2025</div>
<div class="t" style="left:435.3px;top:631.95px;font-size:14px;line-height:16.8px;font-weight:400;color:#1f2024;text-decoration:underline;text-underline-offset:3px;text-decoration-thickness:1px;;letter-spacing:-0.278px">BT Demo Red</div>
<div class="t" style="left:690px;top:631.95px;font-size:14px;line-height:16.8px;font-weight:400;color:#1f2024;">500 gal</div>
<div class="t" style="left:887.7px;top:631.95px;font-size:14px;line-height:16.8px;font-weight:400;color:#1f2024;;letter-spacing:-0.054px">Pinot Noir (100%)</div>
<div class="t" style="left:1020.6px;top:631.95px;font-size:14px;line-height:16.8px;font-weight:400;color:#1f2024;;letter-spacing:0.517px">2025</div>
<div class="t" style="left:1137px;top:631.95px;font-size:14px;line-height:16.8px;font-weight:400;color:#1f2024;;letter-spacing:0.380px">77in</div>
<div class="r" style="left:1268.0px;top:624.2px;width:31.2px;height:31.2px;border:1px solid #ececec;border-radius:50%;background:#fafbfc;box-shadow:0 0 2px rgba(0,0,0,0.04)"></div>
<svg class="r" style="left:1276.6px;top:632.8000000000001px;" width="14" height="14" viewBox="0 0 14 14" fill="none" stroke="#2d2f37" stroke-width="1.3" stroke-linecap="round" stroke-linejoin="round"><path d="M5.2 2.5v5l-2.8 3.6a.6 .6 0 0 0 .5 .9h8.2a.6 .6 0 0 0 .5 -.9l-2.8 -3.6v-5"/><path d="M4.6 2.5h4.8"/></svg>
<div class="r" style="left:1308.0px;top:624.2px;width:31.2px;height:31.2px;border:1px solid #ececec;border-radius:50%;background:#fafbfc;box-shadow:0 0 2px rgba(0,0,0,0.04)"></div>
<svg class="r" style="left:1316.6px;top:632.8000000000001px;" width="14" height="14" viewBox="0 0 14 14" fill="none" stroke="#2d2f37" stroke-width="1.3" stroke-linecap="round" stroke-linejoin="round"><path d="M4.6 3.6h-.4a1 1 0 0 0 -1 1v7.3a.4 .4 0 0 0 .4 .4h7.8a.4 .4 0 0 0 .4 -.4v-7.3a1 1 0 0 0 -1 -1h-.4"/><path d="M4.6 2.2h4.8v2.2h-4.8z"/></svg>
<div class="r" style="left:1348.0px;top:624.2px;width:31.2px;height:31.2px;border:1px solid #ececec;border-radius:50%;background:#fafbfc;box-shadow:0 0 2px rgba(0,0,0,0.04)"></div>
<svg class="r" style="left:1356.6px;top:632.8000000000001px;" width="14" height="14" viewBox="0 0 14 14" fill="none" stroke="#2d2f37" stroke-width="1.3" stroke-linecap="round" stroke-linejoin="round"><path d="M4.6 3.6h-.4a1 1 0 0 0 -1 1v7.3a.4 .4 0 0 0 .4 .4h7.8a.4 .4 0 0 0 .4 -.4v-7.3a1 1 0 0 0 -1 -1h-.4"/><path d="M4.6 2.2h4.8v2.2h-4.8z"/></svg>
<div class="r" style="left:1468.3px;top:624.2px;width:31.2px;height:31.2px;border:1px solid #ececec;border-radius:50%;background:#fafbfc"></div>
<svg class="r" style="left:1477px;top:632.8000000000001px;" width="14" height="14" viewBox="0 0 14 14" fill="none" stroke="#2d2f37" stroke-width="1.3" stroke-linecap="round" stroke-linejoin="round"><path d="M2.5 7h9"/><path d="M8 3.5l3.5 3.5l-3.5 3.5"/></svg>
<svg class="r" style="left:1405px;top:642.3000000000001px;" width="19" height="19" viewBox="0 0 24 24" fill="none" stroke="#c3da96" stroke-width="1.5" stroke-linecap="round" stroke-linejoin="round"><path d="M5 12l5 5l10 -10"/></svg>
<div class="r" style="left:1428.3px;top:624.2px;width:31.2px;height:31.2px;border:1px solid #ececec;border-radius:50%;background:#fafbfc"></div>
<svg class="r" style="left:1436px;top:631.8000000000001px" width="16" height="16" viewBox="0 0 16 16"><ellipse cx="5.5" cy="8.8" rx="3.2" ry="2.5" fill="#6a6d78" stroke="#23252c" stroke-width="1.5" transform="rotate(-20 5.5 8.8)"/><path d="M8.4 7.2l4.4 -2.6" stroke="#23252c" stroke-width="1.7" stroke-linecap="round"/></svg>
<div class="r" style="left:79px;top:666px;width:1803px;height:1px;background:#ececec"></div>
<div class="r" style="left:91px;top:686px;width:16px;height:16px;border:1px solid #dcdcdc;border-radius:3px;background:#fff"></div>
<div class="t" style="left:155px;top:685.15px;font-size:14px;line-height:16.8px;font-weight:400;color:#1f2024;text-decoration:underline;text-underline-offset:3px;text-decoration-thickness:1px;;letter-spacing:0.350px">Juice test</div>
<div class="t" style="left:276.9px;top:685.15px;font-size:14px;line-height:16.8px;font-weight:400;color:#1f2024;;letter-spacing:0.514px">10/06/2025</div>
<div class="t" style="left:435.3px;top:685.15px;font-size:14px;line-height:16.8px;font-weight:400;color:#1f2024;text-decoration:underline;text-underline-offset:3px;text-decoration-thickness:1px;;letter-spacing:-0.278px">BT Demo Red</div>
<div class="t" style="left:690px;top:685.15px;font-size:14px;line-height:16.8px;font-weight:400;color:#1f2024;">500 gal</div>
<div class="t" style="left:887.7px;top:685.15px;font-size:14px;line-height:16.8px;font-weight:400;color:#1f2024;;letter-spacing:-0.054px">Pinot Noir (100%)</div>
<div class="t" style="left:1020.6px;top:685.15px;font-size:14px;line-height:16.8px;font-weight:400;color:#1f2024;;letter-spacing:0.517px">2025</div>
<div class="t" style="left:1137px;top:685.15px;font-size:14px;line-height:16.8px;font-weight:400;color:#1f2024;;letter-spacing:0.380px">77in</div>
<div class="r" style="left:1268.0px;top:677.4px;width:31.2px;height:31.2px;border:1px solid #ececec;border-radius:50%;background:#fafbfc;box-shadow:0 0 2px rgba(0,0,0,0.04)"></div>
<svg class="r" style="left:1276.6px;top:686.0px;" width="14" height="14" viewBox="0 0 14 14" fill="none" stroke="#2d2f37" stroke-width="1.3" stroke-linecap="round" stroke-linejoin="round"><path d="M5.2 2.5v5l-2.8 3.6a.6 .6 0 0 0 .5 .9h8.2a.6 .6 0 0 0 .5 -.9l-2.8 -3.6v-5"/><path d="M4.6 2.5h4.8"/></svg>
<div class="r" style="left:1308.0px;top:677.4px;width:31.2px;height:31.2px;border:1px solid #ececec;border-radius:50%;background:#fafbfc;box-shadow:0 0 2px rgba(0,0,0,0.04)"></div>
<svg class="r" style="left:1316.6px;top:686.0px;" width="14" height="14" viewBox="0 0 14 14" fill="none" stroke="#2d2f37" stroke-width="1.3" stroke-linecap="round" stroke-linejoin="round"><path d="M4.6 3.6h-.4a1 1 0 0 0 -1 1v7.3a.4 .4 0 0 0 .4 .4h7.8a.4 .4 0 0 0 .4 -.4v-7.3a1 1 0 0 0 -1 -1h-.4"/><path d="M4.6 2.2h4.8v2.2h-4.8z"/></svg>
<div class="r" style="left:1348.0px;top:677.4px;width:31.2px;height:31.2px;border:1px solid #ececec;border-radius:50%;background:#fafbfc;box-shadow:0 0 2px rgba(0,0,0,0.04)"></div>
<svg class="r" style="left:1356.6px;top:686.0px;" width="14" height="14" viewBox="0 0 14 14" fill="none" stroke="#2d2f37" stroke-width="1.3" stroke-linecap="round" stroke-linejoin="round"><path d="M4.6 3.6h-.4a1 1 0 0 0 -1 1v7.3a.4 .4 0 0 0 .4 .4h7.8a.4 .4 0 0 0 .4 -.4v-7.3a1 1 0 0 0 -1 -1h-.4"/><path d="M4.6 2.2h4.8v2.2h-4.8z"/></svg>
<div class="r" style="left:1468.3px;top:677.4px;width:31.2px;height:31.2px;border:1px solid #ececec;border-radius:50%;background:#fafbfc"></div>
<svg class="r" style="left:1477px;top:686.0px;" width="14" height="14" viewBox="0 0 14 14" fill="none" stroke="#2d2f37" stroke-width="1.3" stroke-linecap="round" stroke-linejoin="round"><path d="M2.5 7h9"/><path d="M8 3.5l3.5 3.5l-3.5 3.5"/></svg>
<svg class="r" style="left:1405px;top:695.5px;" width="19" height="19" viewBox="0 0 24 24" fill="none" stroke="#c3da96" stroke-width="1.5" stroke-linecap="round" stroke-linejoin="round"><path d="M5 12l5 5l10 -10"/></svg>
<svg class="r" style="left:1445.5px;top:695.5px;" width="19" height="19" viewBox="0 0 24 24" fill="none" stroke="#c3da96" stroke-width="1.5" stroke-linecap="round" stroke-linejoin="round"><path d="M5 12l5 5l10 -10"/></svg>
<div class="r" style="left:626px;top:267px;width:222px;height:424px;background:#fff;border-radius:0 0 4px 4px;box-shadow:0 3px 10px rgba(0,0,0,0.12), 0 0 1px rgba(0,0,0,0.15)"></div>
<div class="r" style="left:833px;top:267px;width:15px;height:421px;background:#f8f8f9;border-left:1px solid #efefef"></div>
<div class="t" style="left:662px;top:284.16px;font-size:16px;line-height:19.2px;font-weight:400;color:#1b1b20;;letter-spacing:0.069px">Sort A-Z</div>
<div class="t" style="left:662px;top:320.06px;font-size:16px;line-height:19.2px;font-weight:400;color:#1b1b20;;letter-spacing:-0.057px">Sort Z-A</div>
<svg class="r" style="left:634.5px;top:318.3px;" width="21" height="21" viewBox="0 0 24 24" fill="none" stroke="#1b1b20" stroke-width="2.6" stroke-linecap="round" stroke-linejoin="round"><path d="M5 12l5 5l10 -10"/></svg>
<div class="r" style="left:628px;top:356px;width:204px;height:1px;background:#ececec"></div>
<div class="t" style="left:662px;top:373.06px;font-size:16px;line-height:19.2px;font-weight:400;color:#1b1b20;;letter-spacing:-0.109px">Group by Vintage</div>
<div class="r" style="left:628px;top:409px;width:204px;height:1px;background:#ececec"></div>
<div class="t" style="left:674.4px;top:420.95px;font-size:14px;line-height:16.8px;font-weight:700;color:#1b1b20;;letter-spacing:0.317px">Filters</div>
<div class="t" style="left:662px;top:454.66px;font-size:16px;line-height:19.2px;font-weight:400;color:#1b1b20;font-style:italic;;letter-spacing:0.046px">Remove all filters</div>
<div class="t" style="left:662.5px;top:494.13px;font-size:15.6px;line-height:18.72px;font-weight:400;color:#1b1b20;;letter-spacing:0.163px">2021</div>
<div class="t" style="left:662.5px;top:534.13px;font-size:15.6px;line-height:18.72px;font-weight:400;color:#1b1b20;;letter-spacing:0.163px">2022</div>
<div class="t" style="left:662.5px;top:574.13px;font-size:15.6px;line-height:18.72px;font-weight:400;color:#1b1b20;;letter-spacing:0.163px">2023</div>
<div class="t" style="left:662.5px;top:614.13px;font-size:15.6px;line-height:18.72px;font-weight:400;color:#1b1b20;;letter-spacing:0.163px">2024</div>
<div class="t" style="left:662.5px;top:654.13px;font-size:15.6px;line-height:18.72px;font-weight:400;color:#1b1b20;;letter-spacing:0.163px">2025</div>
<div class="r" style="left:626px;top:643px;width:207px;height:39px;background:#eceff5"></div>
<div class="t" style="left:662.5px;top:654.23px;font-size:15.6px;line-height:18.72px;font-weight:400;color:#1b1b20;;letter-spacing:0.163px">2025</div>
<svg class="r" style="left:635.2px;top:651.2px;" width="21" height="21" viewBox="0 0 24 24" fill="none" stroke="#1b1b20" stroke-width="2.6" stroke-linecap="round" stroke-linejoin="round"><path d="M5 12l5 5l10 -10"/></svg>
<div class="r" style="left:625px;top:641px;width:103px;height:43px;border:5px solid #fb2a0c"></div>
<div class="r" style="left:609px;top:229px;width:163px;height:42px;border:5px solid #fb2a0c"></div>
</body></html>
